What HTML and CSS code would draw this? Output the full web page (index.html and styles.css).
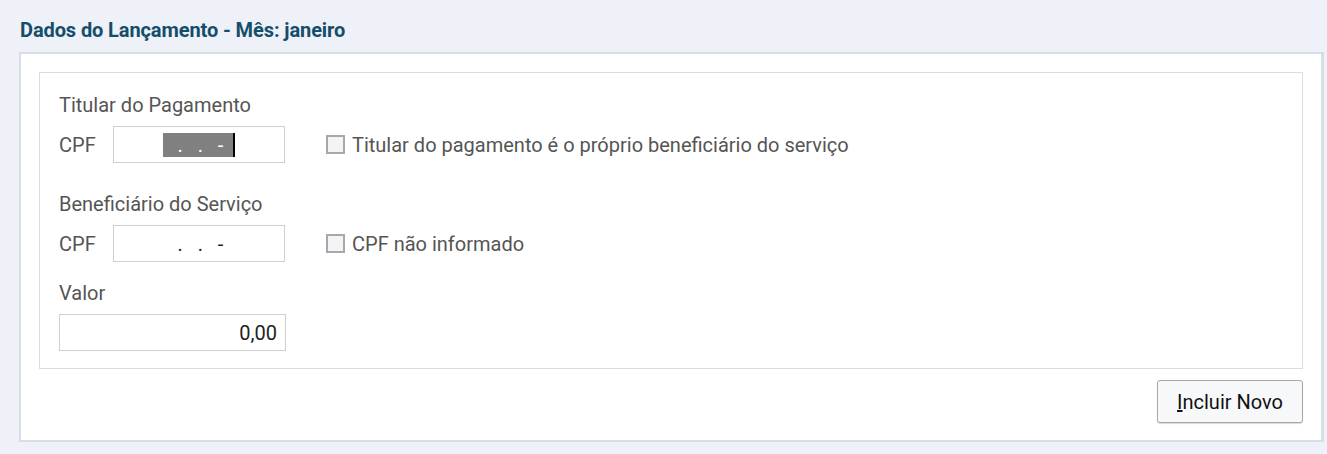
FILE: index.html
```html
<!DOCTYPE html>
<html lang="pt-BR">
<head>
<meta charset="utf-8">
<link rel="stylesheet" href="styles.css">
</head>
<body>
<div class="page">
  <h2 class="title">Dados do Lançamento - Mês: janeiro</h2>
  <div class="panel">
    <div class="fieldset">
      <div class="group-label">Titular do Pagamento</div>
      <div class="row">
        <span class="lbl">CPF</span>
        <div class="input cpf"><span class="sel">   .   .   -  </span><span class="caret"></span></div>
        <label class="check"><span class="box"></span>Titular do pagamento é o próprio beneficiário do serviço</label>
      </div>
      <div class="group-label second">Beneficiário do Serviço</div>
      <div class="row">
        <span class="lbl">CPF</span>
        <div class="input cpf"><span class="mask">   .   .   -  </span><span class="nocaret"></span></div>
        <label class="check"><span class="box"></span>CPF não informado</label>
      </div>
      <div class="group-label third">Valor</div>
      <div class="input valor">0,00</div>
    </div>
    <div class="actions">
      <button class="btn"><span class="u">I</span>ncluir Novo</button>
    </div>
  </div>
</div>
</body>
</html>
```

FILE: styles.css
```css
html, body {
  margin: 0;
  padding: 0;
  background: #eef2f8;
  font-family: Roboto, "Liberation Sans", sans-serif;
}
.page {
  padding: 19px 3px 14px 19px;
}
.title {
  margin: 0 0 11px 1px;
  font-size: 20px;
  font-weight: 700;
  color: #154d6b;
  line-height: 22px;
  letter-spacing: -0.1px;
}
.panel {
  background: #fff;
  border: 2px solid #d7dee9;
  border-right-width: 3px;
  padding: 18px 18px 17px 18px;
}
.fieldset {
  border: 1px solid #dcdcdc;
  padding: 20px 20px 19px 19px;
  height: 256px;
}
.group-label {
  font-size: 20px;
  color: #555;
  line-height: 24px;
}
.group-label.second { margin-top: 29px; }
.group-label.third { margin-top: 19px; }
.row {
  display: flex;
  align-items: center;
  margin-top: 9px;
  height: 37px;
}
.lbl {
  font-size: 20px;
  color: #555;
  width: 54px;
}
.input {
  box-sizing: border-box;
  border: 1px solid #cfcfcf;
  height: 37px;
  background: #fff;
  font-size: 20px;
  color: #222;
  display: flex;
  align-items: center;
}
.cpf {
  width: 172px;
  justify-content: center;
  white-space: pre;
}
.sel, .mask {
  height: 24px;
  line-height: 24px;
  display: inline-block;
}
.sel {
  background: #808080;
  color: #fff;
}
.caret, .nocaret {
  display: inline-block;
  width: 2px;
  height: 24px;
  background: #000;
}
.nocaret { background: transparent; }
.check {
  display: flex;
  align-items: center;
  margin-left: 41px;
  font-size: 20px;
  color: #555;
}
.box {
  box-sizing: border-box;
  width: 19px;
  height: 19px;
  border: 2px solid #a9a9a9;
  background: #f2f4f8;
  margin-right: 7px;
}
.valor {
  margin-top: 9px;
  width: 227px;
  justify-content: flex-end;
  padding-right: 8px;
}
.actions {
  display: flex;
  justify-content: flex-end;
  margin-top: 11px;
}
.btn {
  font-family: Roboto, "Liberation Sans", sans-serif;
  font-size: 20px;
  color: #111;
  width: 146px;
  height: 43px;
  background: #f7f8fa;
  border: 1px solid #a8a8a8;
  border-radius: 3px;
  box-shadow: 0 1px 1px rgba(0,0,0,0.15);
  padding: 0;
}
.u { text-decoration: underline; }
```
